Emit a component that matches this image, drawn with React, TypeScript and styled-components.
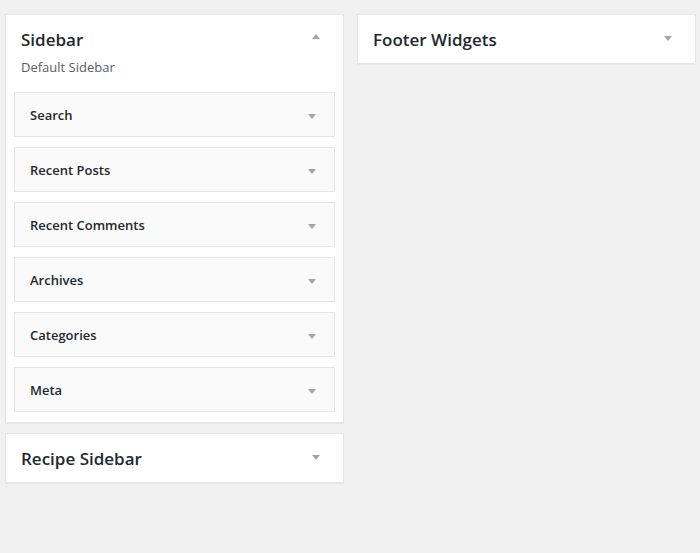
import { createGlobalStyle, styled } from 'styled-components';

const GlobalStyle = createGlobalStyle`
  html, body {
    margin: 0;
    padding: 0;
    background: #f1f1f1;
    font-family: "Open Sans", "Liberation Sans", sans-serif;
    color: #23282d;
  }
  * { box-sizing: border-box; }
`;

const Page = styled.div`
  display: grid;
  grid-template-columns: 339px 339px;
  column-gap: 13px;
  align-items: start;
  padding: 14px 0 0 5px;
  min-height: 553px;
`;

const Column = styled.div`
  display: flex;
  flex-direction: column;
  gap: 10px;
`;

const Area = styled.div`
  background: #fff;
  border: 1px solid #e5e5e5;
  box-shadow: 0 1px 1px rgba(0, 0, 0, 0.04);
`;

const AreaHeader = styled.div`
  position: relative;
  padding: 0 15px;
`;

const AreaTitle = styled.h2`
  margin: 0;
  padding: 16px 0 14px;
  font-size: 17px;
  line-height: 18px;
  font-weight: 600;
  color: #23282d;
`;

const Description = styled.p`
  margin: -5px 0 0;
  font-size: 13px;
  line-height: 18px;
  color: #555d66;
`;

const Toggle = styled.span<{ $up?: boolean; $right: number; $top: number }>`
  position: absolute;
  right: ${(p) => p.$right}px;
  top: ${(p) => p.$top}px;
  width: 0;
  height: 0;
  border-left: 4px solid transparent;
  border-right: 4px solid transparent;
  ${(p) =>
    p.$up ? 'border-bottom: 5px solid #a0a5aa;' : 'border-top: 5px solid #a0a5aa;'}
`;

const WidgetList = styled.div`
  display: flex;
  flex-direction: column;
  gap: 10px;
  padding: 16px 8px 10px;
`;

const Widget = styled.div`
  position: relative;
  height: 45px;
  background: #fafafa;
  border: 1px solid #e5e5e5;
  display: flex;
  align-items: center;
  padding: 1px 15px 0;
`;

const WidgetTitle = styled.h3`
  margin: 0;
  font-size: 13px;
  font-weight: 600;
  line-height: 1;
  color: #23282d;
`;

const widgets = ['Search', 'Recent Posts', 'Recent Comments', 'Archives', 'Categories', 'Meta'];

export default function App() {
  return (
    <>
      <GlobalStyle />
      <Page>
        <Column>
          <Area>
            <AreaHeader>
              <AreaTitle>Sidebar</AreaTitle>
              <Description>Default Sidebar</Description>
              <Toggle $up $right={23} $top={19} />
            </AreaHeader>
            <WidgetList>
              {widgets.map((w) => (
                <Widget key={w}>
                  <WidgetTitle>{w}</WidgetTitle>
                  <Toggle $right={18} $top={21} />
                </Widget>
              ))}
            </WidgetList>
          </Area>
          <Area>
            <AreaHeader>
              <AreaTitle>Recipe Sidebar</AreaTitle>
              <Toggle $right={23} $top={21} />
            </AreaHeader>
          </Area>
        </Column>
        <Column>
          <Area>
            <AreaHeader>
              <AreaTitle>Footer Widgets</AreaTitle>
              <Toggle $right={23} $top={21} />
            </AreaHeader>
          </Area>
        </Column>
      </Page>
    </>
  );
}
